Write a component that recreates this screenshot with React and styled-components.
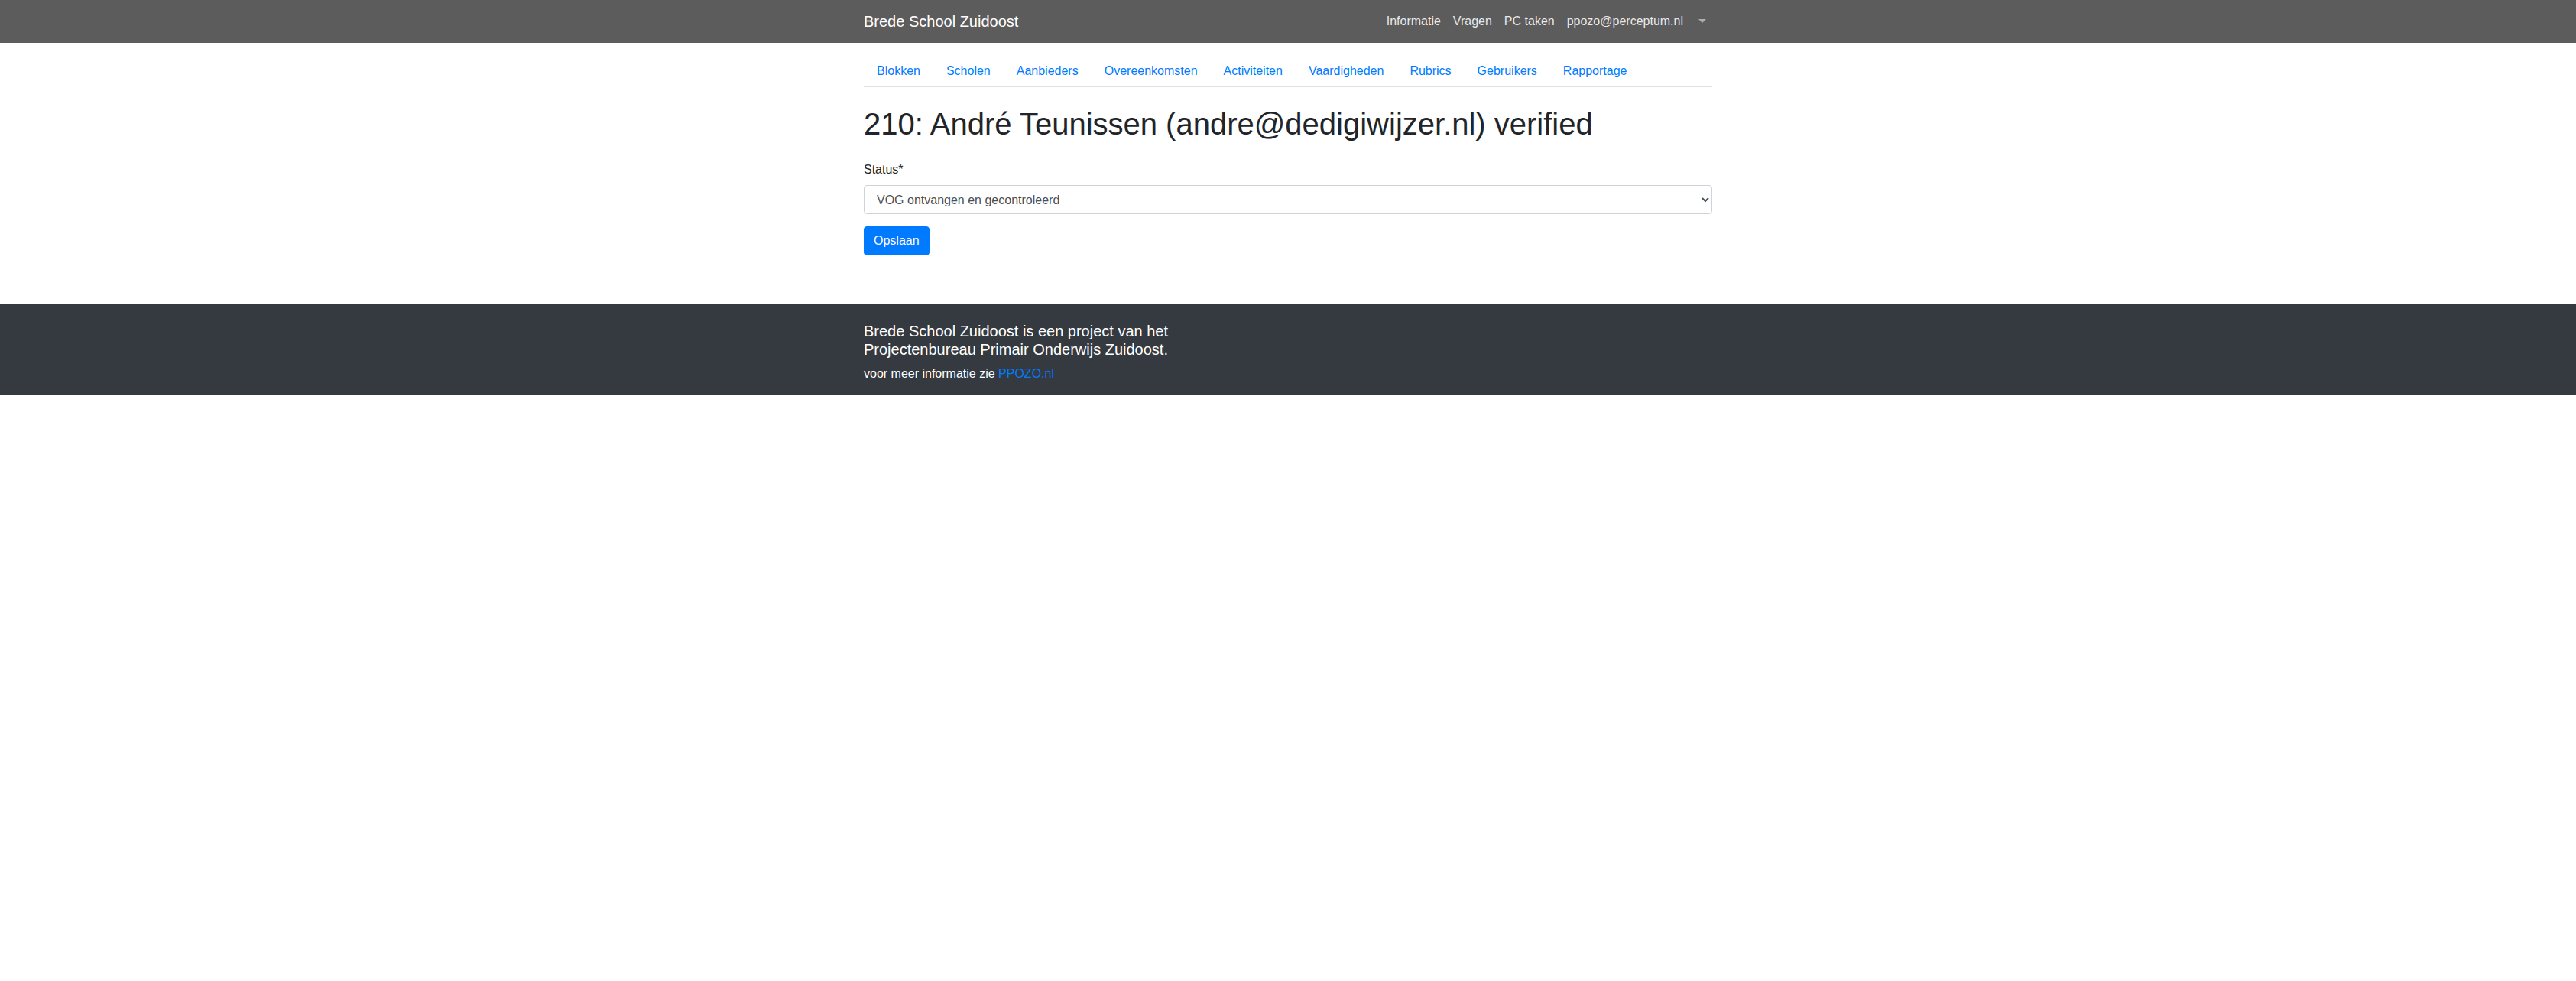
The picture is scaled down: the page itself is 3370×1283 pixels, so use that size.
import React from 'react';
import styled, { createGlobalStyle } from 'styled-components';

const GlobalStyle = createGlobalStyle`
  html, body {
    margin: 0;
    padding: 0;
    background: #fff;
  }
  body {
    font-family: "Liberation Sans", Arial, sans-serif;
    font-size: 16px;
    line-height: 1.5;
    color: #212529;
  }
  *, *::before, *::after {
    box-sizing: border-box;
  }
`;

const Container = styled.div`
  max-width: 1140px;
  margin: 0 auto;
  padding: 0 15px;
`;

const StyledNavbar = styled.nav`
  background: #5c5c5c;
`;

const NavbarInner = styled(Container)`
  display: flex;
  align-items: center;
  justify-content: space-between;
  height: 56px;
`;

const Brand = styled.a`
  font-size: 20px;
  line-height: 30px;
  padding: 5px 0;
  color: #fff;
  text-decoration: none;
  white-space: nowrap;
`;

const NavList = styled.ul`
  display: flex;
  list-style: none;
  margin: 0;
  padding: 0;
`;

const NavLink = styled.a`
  display: block;
  padding: 8px;
  color: ${p => (p.$muted ? 'rgba(255,255,255,.5)' : 'rgba(255,255,255,.88)')};
  text-decoration: none;
  white-space: nowrap;
`;

const Caret = styled.span`
  display: inline-block;
  margin-left: 4px;
  vertical-align: 3px;
  border-top: 5px solid;
  border-right: 5px solid transparent;
  border-left: 5px solid transparent;
`;

const Tabs = styled.ul`
  display: flex;
  list-style: none;
  margin: 16px 0 0;
  padding: 0;
  border-bottom: 1px solid #dee2e6;
`;

const Tab = styled.a`
  display: block;
  margin-bottom: -1px;
  padding: 8px 16px;
  border: 1px solid transparent;
  color: #007bff;
  text-decoration: none;
`;

const Title = styled.h1`
  margin: 24px 0;
  font-size: 40px;
  font-weight: 500;
  line-height: 1.2;
`;

const Form = styled.form`
  margin-bottom: 63px;
`;

const FormGroup = styled.div`
  margin-bottom: 16px;
`;

const Label = styled.label`
  display: inline-block;
  margin-bottom: 8px;
`;

const Select = styled.select`
  display: block;
  width: 100%;
  height: 38px;
  padding: 6px 12px;
  font-family: inherit;
  font-size: 16px;
  line-height: 1.5;
  color: #495057;
  background: #fff;
  border: 1px solid #ced4da;
  border-radius: 4px;
`;

const Button = styled.button`
  padding: 6px 12px;
  font-family: inherit;
  font-size: 16px;
  line-height: 1.5;
  color: #fff;
  background: #007bff;
  border: 1px solid #007bff;
  border-radius: 4px;
`;

const Footer = styled.footer`
  background: #343a40;
  color: #fff;
  padding: 24px 0 16px;
`;

const FooterTitle = styled.h5`
  margin: 0 0 8px;
  font-size: 20px;
  font-weight: 500;
  line-height: 1.2;
`;

const FooterText = styled.p`
  margin: 0;
`;

const FooterLink = styled.a`
  color: #007bff;
  text-decoration: none;
`;

const menu = ['Informatie', 'Vragen', 'PC taken', 'ppozo@perceptum.nl'];
const tabs = ['Blokken', 'Scholen', 'Aanbieders', 'Overeenkomsten', 'Activiteiten', 'Vaardigheden', 'Rubrics', 'Gebruikers', 'Rapportage'];

const App = () => (
  <>
    <GlobalStyle />
    <StyledNavbar>
      <NavbarInner>
        <Brand href="#">Brede School Zuidoost</Brand>
        <NavList>
          {menu.map(item => (
            <li key={item}><NavLink href="#">{item}</NavLink></li>
          ))}
          <li><NavLink href="#" $muted><Caret /></NavLink></li>
        </NavList>
      </NavbarInner>
    </StyledNavbar>
    <Container>
      <Tabs>
        {tabs.map(tab => (
          <li key={tab}><Tab href="#">{tab}</Tab></li>
        ))}
      </Tabs>
      <Title>210: André Teunissen (andre@dedigiwijzer.nl) verified</Title>
      <Form onSubmit={e => e.preventDefault()}>
        <FormGroup>
          <Label htmlFor="status">Status*</Label>
          <Select id="status" defaultValue="vog">
            <option value="vog">VOG ontvangen en gecontroleerd</option>
          </Select>
        </FormGroup>
        <Button type="submit">Opslaan</Button>
      </Form>
    </Container>
    <Footer>
      <Container>
        <FooterTitle>
          Brede School Zuidoost is een project van het<br />
          Projectenbureau Primair Onderwijs Zuidoost.
        </FooterTitle>
        <FooterText>
          voor meer informatie zie <FooterLink href="#">PPOZO.nl</FooterLink>
        </FooterText>
      </Container>
    </Footer>
  </>
);

export default App;
